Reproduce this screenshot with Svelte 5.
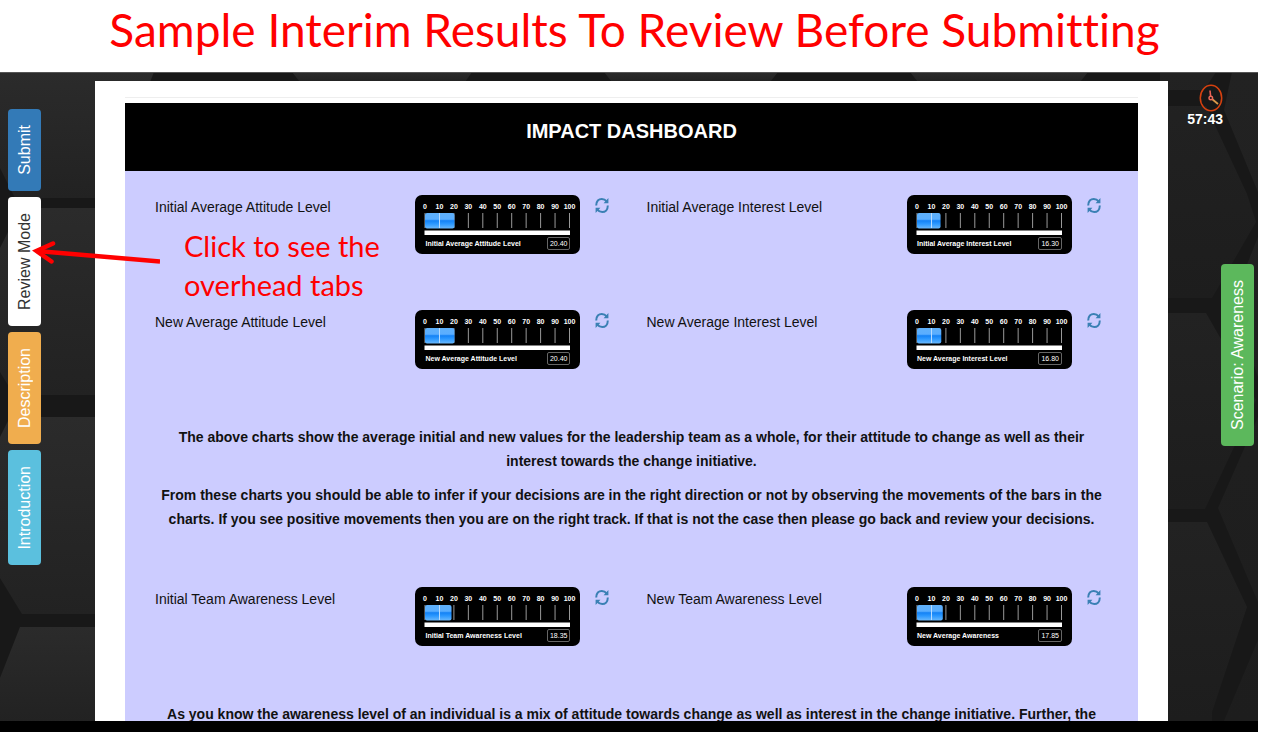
<script>
  const tabs = [
    { label: 'Submit', kind: 'submit' },
    { label: 'Review Mode', kind: 'review' },
    { label: 'Description', kind: 'description' },
    { label: 'Introduction', kind: 'introduction' }
  ];
  const scale = [0, 10, 20, 30, 40, 50, 60, 70, 80, 90, 100];
  const averages = [
    { title: 'Initial Average Attitude Level', caption: 'Initial Average Attitude Level', value: 20.4 },
    { title: 'Initial Average Interest Level', caption: 'Initial Average Interest Level', value: 16.3 },
    { title: 'New Average Attitude Level', caption: 'New Average Attitude Level', value: 20.4 },
    { title: 'New Average Interest Level', caption: 'New Average Interest Level', value: 16.8 }
  ];
  const awareness = [
    { title: 'Initial Team Awareness Level', caption: 'Initial Team Awareness Level', value: 18.35 },
    { title: 'New Team Awareness Level', caption: 'New Average Awareness', value: 17.85 }
  ];
</script>

{#snippet metrics(items)}
  <div class="metrics">
    {#each items as item}
      <div class="metric">
        <span class="metric-title">{item.title}</span>
        <div class="gauge">
          <svg class="dial" viewBox="0 0 165 42" aria-hidden="true">
            <defs>
              <linearGradient id="fluid" x1="0" y1="0" x2="0" y2="1">
                <stop offset="0" stop-color="#5fb0fa" />
                <stop offset="0.4" stop-color="#5aaeff" />
                <stop offset="0.5" stop-color="#1482f5" />
                <stop offset="0.7" stop-color="#2b98ff" />
                <stop offset="1" stop-color="#6ab8fb" />
              </linearGradient>
            </defs>
            {#each scale as n}
              <text x={10 + n * 1.445} y="14" text-anchor="middle">{n}</text>
              <path d="M{10 + n * 1.445} 18V33" stroke="#999" />
            {/each}
            <rect x="10" y="18" width={item.value * 1.445} height="15.5" rx="2" fill="url(#fluid)" />
            <path d="M24.5 18V33" stroke="#b9dcff" />
            <rect x="9.5" y="35.5" width="145.5" height="4.5" fill="#fff" />
          </svg>
          <div class="gauge-foot">
            <span>{item.caption}</span>
            <output>{item.value.toFixed(2)}</output>
          </div>
        </div>
        <button class="refresh" aria-label="Refresh">
          <svg viewBox="0 0 14 16" fill="none" stroke="#3a80b4" stroke-width="2">
            <path d="M1.2 8C1.2 3.6 3.8 1.4 6.8 1.4C8.8 1.4 10.4 2.2 11.6 3.8" />
            <path d="M12.8 8C12.8 12.4 10.2 14.6 7.2 14.6C5.2 14.6 3.6 13.8 2.4 12.2" />
            <path d="M13.4 0.6V5.8H8.6ZM0.6 15.4V10.2H5.4Z" fill="#3a80b4" stroke="none" />
          </svg>
        </button>
      </div>
    {/each}
  </div>
{/snippet}

<div class="page">
  <h1>Sample Interim Results To Review Before Submitting</h1>
  <div class="stage">
    <svg class="backdrop" viewBox="0 0 1258 649" preserveAspectRatio="none" aria-hidden="true">
      <defs>
        <linearGradient id="cell" x1="0" y1="0" x2="0" y2="1">
          <stop offset="0" stop-color="#2b2b2b" />
          <stop offset="1" stop-color="#222" />
        </linearGradient>
        <linearGradient id="cellDark" x1="0" y1="0" x2="0" y2="1">
          <stop offset="0" stop-color="#222" />
          <stop offset="1" stop-color="#1d1d1d" />
        </linearGradient>
      </defs>
      <rect width="1258" height="649" fill="#181818" />
      <g fill="url(#cell)">
        <path d="M0 0H154L146 20H95V126H15L0 96Z" />
        <path d="M292 0H472L465 10H300ZM604 0H778L770 10H612ZM910 0H1088L1080 10H918Z" />
        <path d="M20 136H100V323H14L0 300V176Z" />
        <path d="M10 345H100V542H22L0 506V365Z" />
        <path d="M20 555H100V649H0V606Z" />
      </g>
      <g fill="url(#cellDark)">
        <path d="M1160 0H1216L1204 18H1160ZM1160 34H1206L1247 122L1256 150L1212 226H1160Z" />
        <path d="M1160 241H1206L1256 328L1205 437H1160Z" />
        <path d="M1160 450H1207L1247 535L1212 640V649H1160Z" />
        <path d="M1232 0H1258V120L1224 38ZM1258 165V305L1232 230ZM1258 345V530L1218 436ZM1258 568V649H1224Z" />
      </g>
      <path d="M0 .5H1258" stroke="#555" />
    </svg>

    <nav class="rail">
      {#each tabs as tab}
        <button class="tab {tab.kind}"><span>{tab.label}</span></button>
      {/each}
    </nav>

    <main class="sheet">
      <hr />
      <h2>IMPACT DASHBOARD</h2>
      <section class="board">
        {@render metrics(averages)}
        <div class="notes">
          <p>The above charts show the average initial and new values for the leadership team as a whole, for their attitude to change as well as their interest towards the change initiative.</p>
          <p>From these charts you should be able to infer if your decisions are in the right direction or not by observing the movements of the bars in the charts. If you see positive movements then you are on the right track. If that is not the case then please go back and review your decisions.</p>
        </div>
        {@render metrics(awareness)}
        <div class="notes">
          <p>As you know the awareness level of an individual is a mix of attitude towards change as well as interest in the change initiative. Further, the</p>
        </div>
      </section>
    </main>

    <aside class="side">
      <div class="timer">
        <svg viewBox="0 0 24 28" fill="none" aria-hidden="true">
          <ellipse cx="12" cy="14" rx="10.7" ry="12.7" stroke="#d6410f" stroke-width="1.5" />
          <path d="M11 6.5L11.6 12" stroke="#ee6255" stroke-width="1.6" />
          <path d="M13 15L19 20" stroke="#dc9a4a" stroke-width="1.8" />
          <circle cx="11.8" cy="14" r="1.8" stroke="#ef6b5c" stroke-width="1.4" />
        </svg>
        <time>57:43</time>
      </div>
      <button class="tab scenario"><span>Scenario: Awareness</span></button>
    </aside>

    <div class="callout">
      <svg viewBox="0 0 128 26" aria-hidden="true" fill="none" stroke="#f00">
        <path d="M5 10L128 20.500" stroke-width="4.5" />
        <path d="M21 2.500L4.500 10L19.500 20.500" stroke-width="4.5" stroke-linecap="round" stroke-linejoin="miter" />
      </svg>
      <p>Click to see the<br />overhead tabs</p>
    </div>
  </div>
</div>

<style>
  :global(body) {
    margin: 0;
    background: #fff;
  }
  .page {
    display: flex;
    flex-direction: column;
    height: 100vh;
    overflow: hidden;
    font-family: 'Liberation Sans', Arial, sans-serif;
  }
  h1 {
    flex: none;
    margin: 0;
    padding: 0 0 12px 8px;
    color: #f00;
    font: 400 46px/60px Lato, sans-serif;
    font-variant-ligatures: none;
    text-align: center;
    white-space: nowrap;
  }
  .stage {
    position: relative;
    display: flex;
    flex: 1;
    min-height: 0;
    margin-right: 3px;
    overflow: hidden;
    border-bottom: 11px solid #000;
  }
  .backdrop {
    position: absolute;
    inset: 0;
    width: 100%;
    height: 100%;
  }
  .rail,
  .side,
  .sheet {
    position: relative;
  }
  .rail {
    display: flex;
    flex: 0 0 87px;
    flex-direction: column;
    align-items: flex-start;
    gap: 6px;
    padding: 37px 0 0 8px;
  }
  .tab {
    width: 33px;
    padding: 16px 0;
    border: 0;
    border-radius: 4px;
    color: #fff;
    font: 16px/33px 'Liberation Sans', Arial, sans-serif;
  }
  .tab span {
    display: block;
    writing-mode: vertical-rl;
    transform: rotate(180deg);
  }
  .submit { background: #337ab7; }
  .review { background: #fff; color: #333; }
  .description { background: #f0ad4e; }
  .introduction { background: #5bc0de; }
  .scenario { background: #5cb85c; }
  .sheet {
    flex: 1;
    min-width: 0;
    margin-top: 9px;
    padding: 0 30px;
    background: #fff;
  }
  hr {
    margin: 16px 0 5px;
    border: 0;
    border-top: 1px solid #eee;
  }
  h2 {
    margin: 0;
    padding: 8px 0 20px;
    background: #000;
    color: #fff;
    font-size: 20px;
    line-height: 40px;
    text-align: center;
  }
  .board {
    padding-top: 24px;
    background: #ccf;
    color: #111;
  }
  .metrics {
    display: grid;
    grid-template-columns: 1fr 1fr;
    margin-left: 30px;
  }
  .metric {
    display: flex;
    align-items: flex-start;
    height: 115px;
  }
  .metric-title {
    flex: 0 0 53%;
    font-size: 14px;
    line-height: 24px;
  }
  .gauge {
    width: 165px;
    height: 59px;
    flex: none;
    border-radius: 7px;
    background: #000;
  }
  .dial {
    display: block;
    width: 100%;
  }
  .dial text {
    fill: #fff;
    font: bold 7px 'Liberation Sans', Arial, sans-serif;
  }
  .gauge-foot {
    display: flex;
    align-items: center;
    justify-content: space-between;
    padding: 0 10px;
    color: #fff;
    font-size: 7px;
    font-weight: bold;
    line-height: 12px;
  }
  output {
    padding: 0 2px;
    border: 1px solid #666;
    border-radius: 2px;
    font-size: 7px;
    font-weight: normal;
    line-height: 11px;
  }
  .refresh {
    margin-left: 15px;
    padding: 2px 0 0;
    border: 0;
    background: none;
  }
  .refresh svg {
    display: block;
    width: 14px;
    height: 17px;
  }
  .notes {
    padding: 0 30px;
    font-size: 14px;
    font-weight: bold;
    line-height: 24px;
    text-align: center;
  }
  .notes p {
    margin: 0 0 10px;
  }
  .notes + .metrics {
    margin-top: 56px;
  }
  .side {
    display: flex;
    flex: 0 0 90px;
    flex-direction: column;
    padding-top: 12px;
  }
  .timer {
    display: flex;
    flex-direction: column;
    align-items: flex-end;
    padding-right: 35px;
    color: #fff;
    font-size: 14px;
    font-weight: bold;
    line-height: 14px;
  }
  .timer svg {
    width: 24px;
    height: 28px;
  }
  .side .tab {
    align-self: flex-end;
    margin: 138px 4px 0 0;
  }
  .callout {
    position: absolute;
    top: 154px;
    left: 32px;
    display: flex;
    gap: 24px;
    color: #f00;
    font: 29px/39px Lato, sans-serif;
    font-variant-ligatures: none;
  }
  .callout svg {
    width: 128px;
    height: 26px;
    margin-top: 15px;
  }
  .callout p {
    margin: 0;
  }
</style>
